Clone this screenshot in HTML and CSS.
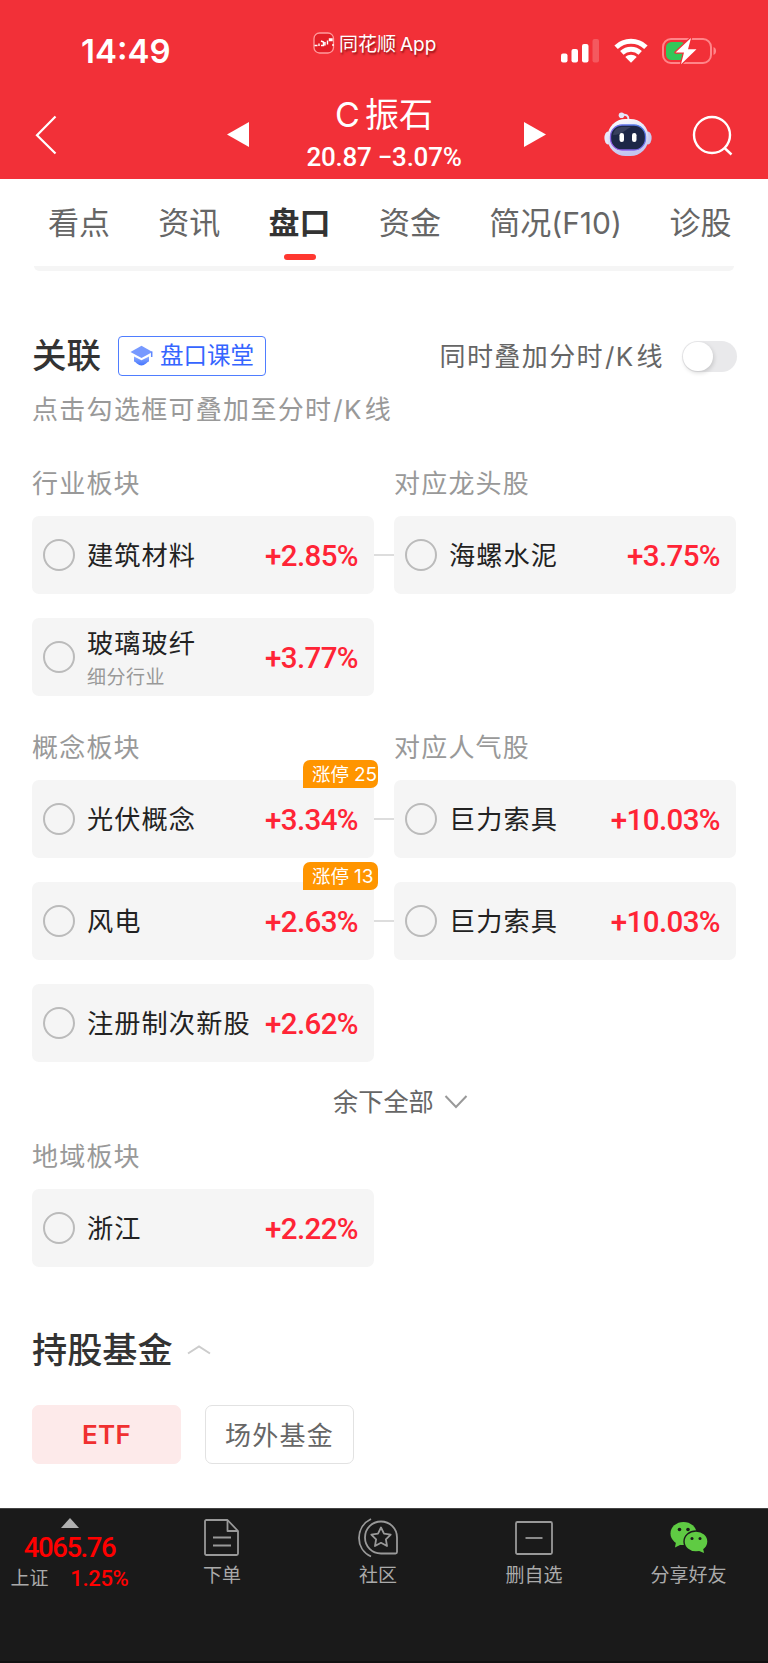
FILE: index.html
```html
<!DOCTYPE html>
<html lang="zh-CN">
<head>
    <meta charset="UTF-8">
    <meta name="viewport" content="width=device-width, initial-scale=1.0">
    <title>C振石</title>
    <link rel="stylesheet" href="styles.css">
</head>
<body>
    <header class="header">
        <div class="status-bar">
            <div class="time">14:49</div>
            <div class="app-tag">
                <svg width="22" height="22" viewBox="0 0 22 22">
                    <rect x="1" y="1" width="19.5" height="20" rx="5.5" fill="#e31f28" stroke="#ff9a9c" stroke-width="1.3"/>
                    <path d="M1.5 13.5h3M6 14v-2.5M8 9l2.5 1v3.5H8M12 10v3.5M14.5 8.5v4M16.5 8.5H19V7h-2.5zM20 12v2" fill="none" stroke="#fff" stroke-width="1.4"/>
                </svg>
                <span>同花顺<span class="latin">App</span></span>
            </div>
            <div class="status-icons">
                <svg width="39" height="26" viewBox="0 0 39 26">
                    <g fill="#fff">
                        <rect x="0" y="15.5" width="6.5" height="9" rx="2"/>
                        <rect x="10.5" y="11" width="6.5" height="13.5" rx="2"/>
                        <rect x="21" y="6" width="6.5" height="18.5" rx="2"/>
                        <rect x="31.5" y="1" width="6.5" height="23.5" rx="2" opacity=".2"/>
                    </g>
                </svg>
                <svg width="34" height="26" viewBox="0 0 34 26">
                    <g fill="none" stroke="#fff" stroke-width="5">
                        <path d="M2.1 9.2C10.5 1.3 23.5 1.3 31.9 9.2"/>
                        <path d="M7.8 14.8C13 10 21 10 26.2 14.8"/>
                    </g>
                    <path d="M11.3 19c3.2-2.9 8.2-2.9 11.4 0L17 24.8z" fill="#fff"/>
                </svg>
                <svg width="55" height="28" viewBox="0 0 55 28">
                    <rect x="1" y="2" width="48" height="24" rx="8" fill="none" stroke="#ff8589" stroke-width="2"/>
                    <path d="M51.5 10c3.4 1.2 3.4 6.8 0 8z" fill="#ff8589"/>
                    <rect x="4" y="5" width="20" height="18" rx="5.5" fill="#34c759"/>
                    <path d="M29 1 13.5 15.5H22l-3 11.8L34.5 12.3H26z" fill="#fff" stroke="#f23038" stroke-width="2.4" stroke-linejoin="round" paint-order="stroke"/>
                </svg>
            </div>
        </div>
        <div class="title-bar">
            <svg class="back" width="22" height="40" viewBox="0 0 22 40">
                <path d="M20.5 1.5 2 20.3 20.5 38.5" fill="none" stroke="#fff" stroke-width="2.2"/>
            </svg>
            <svg class="prev" width="22" height="25" viewBox="0 0 22 25"><path d="M22 0v25L0 12.5z" fill="#fff"/></svg>
            <div class="stock">
                <div class="stock-name">C<span>振石</span></div>
                <div class="stock-price">20.87 −3.07%</div>
            </div>
            <svg class="next" width="22" height="25" viewBox="0 0 22 25"><path d="M0 0v25l22-12.5z" fill="#fff"/></svg>
            <svg class="robot" width="48" height="46" viewBox="0 0 48 46">
                <defs>
                    <linearGradient id="shell" x1="0" y1="0" x2="0.3" y2="1">
                        <stop offset="0" stop-color="#fff"/>
                        <stop offset="1" stop-color="#c3c6ef"/>
                    </linearGradient>
                    <linearGradient id="rim" x1="0" y1="1" x2="1" y2="0">
                        <stop offset="0" stop-color="#a05be8"/>
                        <stop offset="1" stop-color="#4a7fe8"/>
                    </linearGradient>
                </defs>
                <path d="M18 3c4-1 6.5.5 6.5 4.5" fill="none" stroke="#e4e4f8" stroke-width="2"/>
                <circle cx="17.5" cy="3.3" r="2.8" fill="#e4e6fa"/>
                <ellipse cx="4" cy="26" rx="3.6" ry="6.5" fill="#e8e8fa"/>
                <ellipse cx="44" cy="26" rx="3.6" ry="6.5" fill="#c9caf0"/>
                <rect x="3.5" y="7" width="41" height="37" rx="18" fill="url(#shell)"/>
                <rect x="6.5" y="13" width="35" height="25" rx="11.5" fill="#1d2747" stroke="url(#rim)" stroke-width="1.3"/>
                <path d="M9 23c1-6 5-8 10-8h8c-5 2-9 8-18 8z" fill="#444b68" opacity=".7"/>
                <rect x="15.5" y="21" width="4.5" height="9" rx="2.2" fill="#fff"/>
                <rect x="28" y="21" width="4.5" height="9" rx="2.2" fill="#fff"/>
            </svg>
            <svg class="search" width="42" height="42" viewBox="0 0 42 42">
                <circle cx="20" cy="20" r="18" fill="none" stroke="#fff" stroke-width="2.4"/>
                <path d="M32 32.5l7.5 7" stroke="#fff" stroke-width="2.4"/>
            </svg>
        </div>
    </header>

    <nav class="tabs">
        <a class="tab">看点</a>
        <a class="tab">资讯</a>
        <a class="tab active">盘口</a>
        <a class="tab">资金</a>
        <a class="tab">简况<span class="f10">(F10)</span></a>
        <a class="tab">诊股</a>
    </nav>

    <main class="content">
        <div class="card-end"></div>

        <div class="section-head">
            <h2>关联</h2>
            <div class="lesson">
                <svg width="24" height="22" viewBox="0 0 24 22">
                    <defs>
                        <linearGradient id="cap" x1="0" y1="0" x2="0" y2="1">
                            <stop offset="0" stop-color="#8facff"/>
                            <stop offset="1" stop-color="#4274ff"/>
                        </linearGradient>
                    </defs>
                    <path d="M11.5.8 22.5 7 11.5 13 .5 7z" fill="#7799ff"/>
                    <path d="M4 11.5l7.5 3.800 7.5-3.800v5c-2 .5-4 4-7.5 4s-5.5-3.5-7.5-4z" fill="url(#cap)"/>
                    <path d="M21.7 6.5V12" stroke="#5f88ff" stroke-width="1.5"/>
                </svg>
                <span>盘口课堂</span>
            </div>
            <div class="overlay-label">同时叠加分时<span class="k">/K</span>线</div>
            <div class="switch"></div>
        </div>
        <p class="hint">点击勾选框可叠加至分时<span class="k">/K</span>线</p>

        <div class="labels"><span>行业板块</span><span>对应龙头股</span></div>
        <div class="rows">
            <div class="row linked">
                <div class="item"><i class="check"></i><div class="name">建筑材料</div><b>+2.85%</b></div>
                <div class="item"><i class="check"></i><div class="name">海螺水泥</div><b>+3.75%</b></div>
            </div>
            <div class="row">
                <div class="item"><i class="check"></i><div class="name two-line">玻璃玻纤<small>细分行业</small></div><b>+3.77%</b></div>
            </div>
        </div>

        <div class="labels concept"><span>概念板块</span><span>对应人气股</span></div>
        <div class="rows">
            <div class="row linked">
                <div class="item"><i class="check"></i><div class="name">光伏概念</div><b>+3.34%</b><span class="badge">涨停<span>25</span></span></div>
                <div class="item"><i class="check"></i><div class="name">巨力索具</div><b>+10.03%</b></div>
            </div>
            <div class="row linked">
                <div class="item"><i class="check"></i><div class="name">风电</div><b>+2.63%</b><span class="badge">涨停<span>13</span></span></div>
                <div class="item"><i class="check"></i><div class="name">巨力索具</div><b>+10.03%</b></div>
            </div>
            <div class="row">
                <div class="item"><i class="check"></i><div class="name">注册制次新股</div><b>+2.62%</b></div>
            </div>
        </div>

        <div class="more">
            <span>余下全部</span>
            <svg width="24" height="16" viewBox="0 0 24 16"><path d="M1.5 2 12 13 22.5 2" fill="none" stroke="#999" stroke-width="2"/></svg>
        </div>

        <div class="labels region"><span>地域板块</span></div>
        <div class="rows">
            <div class="row">
                <div class="item"><i class="check"></i><div class="name">浙江</div><b>+2.22%</b></div>
            </div>
        </div>

        <div class="fund-head">
            <h2>持股基金</h2>
            <svg width="24" height="12" viewBox="0 0 24 12"><path d="M1 9.5 12 2.5 23 9.5" fill="none" stroke="#ccc" stroke-width="2"/></svg>
        </div>
        <div class="fund-tabs">
            <button class="fund-tab selected">ETF</button>
            <button class="fund-tab">场外基金</button>
        </div>
    </main>

    <footer class="toolbar">
        <div class="index">
            <svg width="18" height="10" viewBox="0 0 18 10"><path d="M9 0l9 10H0z" fill="#b0b0b0"/></svg>
            <div class="index-value">4065.76</div>
            <div class="index-change"><span>上证</span><em>1.25%</em></div>
        </div>
        <div class="tool">
            <svg width="36" height="38" viewBox="0 0 36 38">
                <g fill="none" stroke="#999" stroke-width="1.8" stroke-linejoin="round">
                    <path d="M2.5 1H23.5L34 12v22.5q0 1.5-1.5 1.5h-30Q1 36 1 34.5v-32Q1 1 2.5 1z"/>
                    <path d="M23.5 1.5V12H34M9 18.5h18M9 26.5h18"/>
                </g>
            </svg>
            <span>下单</span>
        </div>
        <div class="tool">
            <svg width="40" height="40" viewBox="0 0 40 40">
                <g fill="none" stroke="#999" stroke-width="1.8" stroke-linejoin="round">
                    <path d="M13 1C-3 9-3 31 13 38.5"/>
                    <path d="M23 3.5c9 0 16 7 16 16V34q0 1.5-1.5 1.5H23c-9 0-16-7-16-16s7-16 16-16z"/>
                    <path d="M23 9.5l3 6.1 6.7 1-4.8 4.7 1.1 6.7-6-3.2-6 3.2 1.1-6.7-4.8-4.7 6.7-1z"/>
                </g>
            </svg>
            <span>社区</span>
        </div>
        <div class="tool">
            <svg width="38" height="36" viewBox="0 0 38 36">
                <rect x="1" y="2" width="36" height="32" rx="1.5" fill="none" stroke="#999" stroke-width="1.8"/>
                <path d="M10.5 18h17" stroke="#999" stroke-width="1.8"/>
            </svg>
            <span>删自选</span>
        </div>
        <div class="tool share">
            <svg width="38" height="34" viewBox="0 0 38 34">
                <g fill="#5fcb43">
                    <ellipse cx="13.5" cy="12.5" rx="13" ry="11.5"/>
                    <path d="M6 21l-1 5.5 7-3.5z"/>
                    <ellipse cx="26" cy="20.5" rx="12" ry="10.5" stroke="#1a1a1a" stroke-width="1.4"/>
                    <path d="M28 29.5l6 2.5-1-5z"/>
                </g>
                <g fill="#1a1a1a">
                    <circle cx="9.5" cy="8.5" r="1.8"/>
                    <circle cx="18" cy="8.5" r="1.8"/>
                    <circle cx="22" cy="17.5" r="1.5"/>
                    <circle cx="30" cy="17.5" r="1.5"/>
                </g>
            </svg>
            <span>分享好友</span>
        </div>
    </footer>
</body>
</html>
```

FILE: styles.css
```css
* {
    box-sizing: border-box;
}
body {
    width: 768px;
    height: 1663px;
    margin: 0;
    display: flex;
    flex-direction: column;
    background-color: #fff;
    color: #333;
    font-family: Inter, "Noto Sans CJK SC", sans-serif;
    overflow: hidden;
}
svg {
    display: block;
    flex: none;
}
h2, p {
    margin: 0;
}

/* header */
.header {
    height: 179px;
    background-color: #f23038;
    color: #fff;
}
.status-bar {
    display: flex;
    height: 94px;
    padding-left: 81px;
}
.time {
    width: 232px;
    padding-top: 31px;
    font-size: 33px;
    line-height: 40px;
    font-weight: 600;
}
.app-tag {
    display: flex;
    width: 248px;
    padding-top: 32px;
    gap: 4px;
    font-size: 19px;
    line-height: 26px;
    text-shadow: 1px 2px 2px rgba(80, 0, 0, 0.6);
}
.app-tag .latin {
    margin-left: 4px;
}
.status-icons {
    display: flex;
    padding-top: 38px;
    gap: 14px;
}
.status-icons svg:last-child {
    margin-top: -1px;
}
.title-bar {
    display: flex;
    height: 85px;
    padding-left: 35px;
}
.back {
    margin-top: 21px;
}
.prev {
    margin: 28px 0 0 170px;
}
.stock {
    width: 275px;
    text-align: center;
}
.stock-name {
    height: 48px;
    padding-right: 5px;
    font-size: 34px;
    line-height: 42px;
}
.stock-name span {
    margin-left: 5px;
}
.stock-price {
    padding-right: 5px;
    font-family: Roboto, sans-serif;
    font-size: 26px;
    line-height: 30px;
    font-weight: 500;
    letter-spacing: -0.25px;
}
.next {
    margin-top: 28px;
}
.robot {
    margin: 18px 0 0 58px;
}
.search {
    margin: 21px 0 0 40px;
}

/* tabs */
.tabs {
    display: flex;
    flex: none;
    height: 87px;
    padding-left: 48px;
    gap: 48.3px;
}
.tab {
    flex: none;
    width: 62px;
    padding-top: 22px;
    font-size: 31px;
    line-height: 44px;
    color: #666;
    white-space: nowrap;
}
.tab:nth-child(5) {
    width: 132px;
}
.f10 {
    font-size: 30px;
}
.tab.active {
    color: #333;
    font-weight: 700;
}
.tab.active::after {
    content: "";
    display: block;
    width: 32px;
    height: 6px;
    margin: 9px 0 0 15px;
    border-radius: 3px;
    background-color: #ff3830;
}

/* content */
.content {
    height: 1242px;
    flex: none;
    padding: 0 32px;
}
.card-end {
    height: 5px;
    margin: 0 2px;
    border-radius: 0 0 9px 9px;
    background-color: #f5f5f5;
}
.section-head {
    display: flex;
    align-items: center;
    height: 40px;
    margin-top: 65px;
    margin-right: -1px;
}
h2 {
    font-size: 34.5px;
    line-height: 40px;
    font-weight: 500;
}
.section-head h2 {
    width: 86px;
}
.lesson {
    display: flex;
    align-items: center;
    width: 148px;
    height: 40px;
    padding-left: 11px;
    gap: 6px;
    border: 1.5px solid #4f7dff;
    border-radius: 4px;
    color: #3565ff;
    font-size: 23.5px;
    line-height: 34px;
    white-space: nowrap;
}
.overlay-label {
    margin-left: auto;
    padding-top: 2px;
    color: #666;
    font-size: 26px;
    letter-spacing: 1.4px;
    line-height: 38px;
    white-space: nowrap;
}
.k {
    margin: 0 2px 0 1px;
}
.switch {
    width: 55px;
    height: 31px;
    margin-left: 18px;
    padding: 1px;
    border-radius: 16px;
    background-color: #e9e9eb;
}
.switch::before {
    content: "";
    display: block;
    width: 30px;
    height: 29px;
    border-radius: 15px;
    background-color: #fff;
    box-shadow: 1px 2px 4px rgba(0, 0, 0, 0.15);
}
.hint {
    height: 40px;
    margin-top: 15px;
    color: #999;
    font-size: 26px;
    letter-spacing: 1.3px;
    line-height: 38px;
}
.labels {
    display: grid;
    grid-template-columns: 342px 342px;
    gap: 20px;
    height: 40px;
    margin-top: 34px;
    color: #999;
    font-size: 26px;
    letter-spacing: 1.2px;
    line-height: 38px;
}
.labels.concept {
    margin-top: 33px;
}
.labels.region {
    margin-top: 16px;
}
.rows {
    display: grid;
    gap: 24px;
    margin-top: 11px;
}
.row {
    display: grid;
    grid-template-columns: 342px 342px;
    gap: 20px;
}
.row.linked {
    background: linear-gradient(#ddd, #ddd) 342px 38px / 20px 2px no-repeat;
}
.item {
    position: relative;
    display: flex;
    align-items: center;
    height: 78px;
    padding: 0 16px 0 11px;
    border-radius: 7px;
    background-color: #f5f5f5;
}
.check {
    flex: none;
    width: 32px;
    height: 32px;
    border: 2px solid #bbb;
    border-radius: 50%;
}
.name {
    margin-left: 12px;
    padding-top: 1px;
    color: #222;
    font-size: 26.2px;
    letter-spacing: 1.1px;
    line-height: 38px;
    white-space: nowrap;
}
.two-line {
    padding-top: 7px;
    line-height: 34px;
}
.name small {
    display: block;
    color: #999;
    font-size: 19px;
    letter-spacing: 0.5px;
    line-height: 33px;
}
.item b {
    margin-left: auto;
    padding-top: 2px;
    color: #ff2436;
    font-family: Roboto, sans-serif;
    font-size: 29.5px;
    font-weight: 500;
    letter-spacing: -0.6px;
}
.badge {
    position: absolute;
    top: -20px;
    right: -4px;
    width: 75px;
    height: 28px;
    padding-left: 9px;
    border-radius: 7px 7px 7px 0;
    background-color: #ff9500;
    color: #fff;
    font-size: 18.5px;
    line-height: 28px;
    white-space: nowrap;
}
.badge span {
    margin-left: 5px;
    font-size: 19px;
}
.more {
    display: flex;
    align-items: center;
    height: 40px;
    margin-top: 20px;
    padding-left: 301px;
    gap: 10px;
    color: #666;
    font-size: 25.2px;
    line-height: 36px;
}
.more span {
    margin-top: -1px;
}
.fund-head {
    display: flex;
    align-items: center;
    height: 44px;
    margin-top: 61px;
    gap: 14px;
}
.fund-head h2 {
    font-size: 35.2px;
}
.fund-tabs {
    display: flex;
    gap: 24px;
    margin-top: 33px;
}
.fund-tab {
    width: 149px;
    height: 59px;
    padding: 0 0 3px;
    border: 1.5px solid #e2e2e2;
    border-radius: 7px;
    background-color: #fff;
    color: #666;
    font-family: inherit;
    font-size: 26px;
    letter-spacing: 1.2px;
}
.fund-tab.selected {
    padding-bottom: 0;
    border-color: #fdeaea;
    background-color: #fdeaea;
    color: #f03030;
    font-weight: 600;
    letter-spacing: 0.3px;
}

/* bottom toolbar */
.toolbar {
    display: flex;
    flex: 1;
    border-top: 1px solid #444;
    border-bottom: 2px solid #111;
    background-color: #1a1a1a;
    color: #aaa;
    font-size: 19px;
}
.index {
    display: flex;
    flex-direction: column;
    align-items: center;
    width: 144px;
    padding: 9px 5px 0 0;
}
.index-value {
    margin-top: 4px;
    color: #f00;
    font-family: Roboto, sans-serif;
    font-size: 27.5px;
    line-height: 32px;
    font-weight: 500;
    letter-spacing: -1.4px;
}
.index-change {
    display: flex;
    justify-content: space-between;
    width: 118px;
    margin-top: 1px;
    line-height: 28px;
}
.index-change em {
    color: #f00;
    font-family: Roboto, sans-serif;
    font-size: 22px;
    font-weight: 500;
    font-style: normal;
    letter-spacing: -0.3px;
}
.tool {
    display: flex;
    flex-direction: column;
    align-items: center;
    width: 156px;
    padding-top: 9px;
}
.tool.share {
    padding-right: 3px;
}
.tool svg {
    height: 40px;
}
.tool span {
    margin-top: 4px;
    line-height: 27px;
}
```
